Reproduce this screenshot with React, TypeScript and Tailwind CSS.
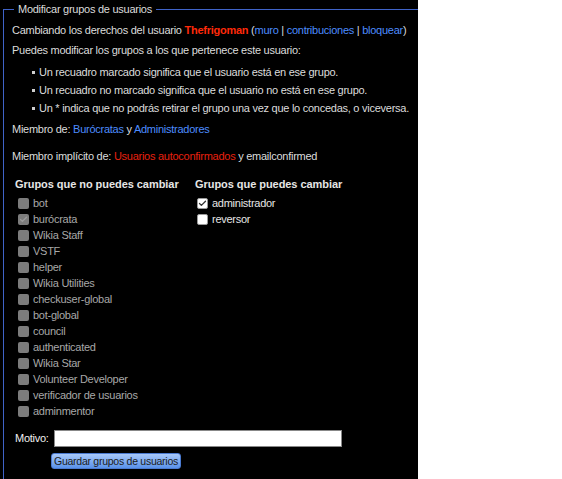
import { Check } from "lucide-react";

const lockedGroups = [
  { name: "bot", checked: false },
  { name: "burócrata", checked: true },
  { name: "Wikia Staff", checked: false },
  { name: "VSTF", checked: false },
  { name: "helper", checked: false },
  { name: "Wikia Utilities", checked: false },
  { name: "checkuser-global", checked: false },
  { name: "bot-global", checked: false },
  { name: "council", checked: false },
  { name: "authenticated", checked: false },
  { name: "Wikia Star", checked: false },
  { name: "Volunteer Developer", checked: false },
  { name: "verificador de usuarios", checked: false },
  { name: "adminmentor", checked: false },
];

const openGroups = [
  { name: "administrador", checked: true },
  { name: "reversor", checked: false },
];

const Box = ({ checked, disabled }: { checked: boolean; disabled?: boolean }) => (
  <span
    className={`flex items-center justify-center w-[11px] h-[11px] rounded-[2px] shrink-0 ${
      disabled ? "bg-[#7c7c7c]" : "bg-white border border-[#9a9a9a]"
    }`}
  >
    {checked && (
      <Check
        size={9}
        strokeWidth={3.5}
        className={disabled ? "text-[#9c9c9c]" : "text-[#333]"}
      />
    )}
  </span>
);

const App = () => {
  return (
    <div
      className="flex w-[562px] h-[479px] bg-white text-[11px] tracking-[-0.26px] text-[#dcdcdc] whitespace-nowrap"
      style={{ fontFamily: '"Liberation Sans", Arial, sans-serif' }}
    >
      <div className="w-[418px] h-full bg-black overflow-hidden pt-[2px] pl-[3px]">
        <fieldset className="w-[440px] border border-[#3f63c8] pl-[8px] pb-[10px]">
          <legend className="ml-[2px] px-[4px] leading-[14px] text-[#dcdcdc]">
            Modificar grupos de usuarios
          </legend>

          <p className="mt-[5px] leading-[18px]">
            Cambiando los derechos del usuario{" "}
            <span className="font-bold text-[#ff2a0a]">Thefrigoman</span>{" "}
            (<span className="text-[#4d8dff]">muro</span> |{" "}
            <span className="text-[#4d8dff]">contribuciones</span> |{" "}
            <span className="text-[#4d8dff]">bloquear</span>)
          </p>
          <p className="mt-[2px] leading-[18px]">
            Puedes modificar los grupos a los que pertenece este usuario:
          </p>

          <ul className="mt-[4px] pl-[20px]">
            {[
              "Un recuadro marcado significa que el usuario está en ese grupo.",
              "Un recuadro no marcado significa que el usuario no está en ese grupo.",
              "Un * indica que no podrás retirar el grupo una vez que lo concedas, o viceversa.",
            ].map((t) => (
              <li key={t} className="flex items-center gap-[4px] leading-[18px]">
                <span className="w-[3px] h-[3px] bg-[#cfcfcf] shrink-0" />
                {t}
              </li>
            ))}
          </ul>

          <p className="mt-[3px] leading-[18px]">
            Miembro de: <span className="text-[#4d8dff]">Burócratas</span> y{" "}
            <span className="text-[#4d8dff]">Administradores</span>
          </p>
          <p className="mt-[9px] leading-[18px]">
            Miembro implícito de:{" "}
            <span className="text-[#e8200f]">Usuarios autoconfirmados</span> y
            emailconfirmed
          </p>

          <div className="flex mt-[10px] pl-[3px]">
            <div className="w-[180px]">
              <h3 className="font-bold leading-[18px] tracking-[-0.05px] text-[#e6e6e6]">
                Grupos que no puedes cambiar
              </h3>
              <div className="mt-[2px] pl-[3px]">
                {lockedGroups.map((g) => (
                  <label
                    key={g.name}
                    className="flex items-center gap-[4px] h-[16px] text-[#a8a8a8]"
                  >
                    <Box checked={g.checked} disabled />
                    {g.name}
                  </label>
                ))}
              </div>
            </div>
            <div>
              <h3 className="font-bold leading-[18px] tracking-[-0.05px] text-[#e6e6e6]">
                Grupos que puedes cambiar
              </h3>
              <div className="mt-[2px] pl-[2px]">
                {openGroups.map((g) => (
                  <label
                    key={g.name}
                    className="flex items-center gap-[4px] h-[16px] text-[#e6e6e6]"
                  >
                    <Box checked={g.checked} />
                    {g.name}
                  </label>
                ))}
              </div>
            </div>
          </div>

          <div className="flex items-center mt-[11px] pl-[3px] gap-[5px]">
            <span className="text-[#f0f0f0]">Motivo:</span>
            <input
              type="text"
              className="w-[288px] h-[17px] bg-white border border-[#888]"
            />
          </div>
          <button className="mt-[6px] ml-[39px] w-[130px] h-[16px] rounded-[3px] border border-[#4a7ad0] bg-gradient-to-b from-[#a8c8f8] to-[#5a92ea] text-[10.5px] leading-[14px] text-[#1b1b1b]">
            Guardar grupos de usuarios
          </button>
        </fieldset>
      </div>
    </div>
  );
};

export default App;
